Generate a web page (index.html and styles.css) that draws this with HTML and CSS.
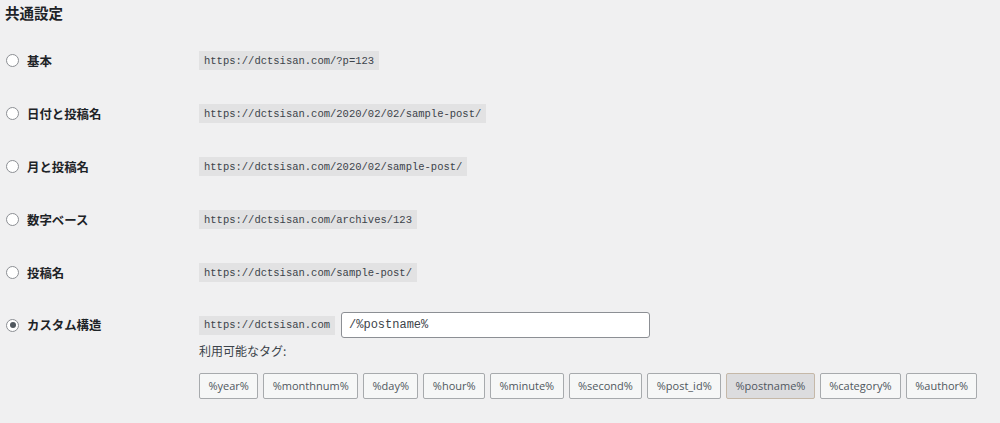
FILE: index.html
```html
<!DOCTYPE html>
<html lang="ja">
<head>
<meta charset="utf-8">
<title>共通設定</title>
<link rel="stylesheet" href="styles.css">
</head>
<body>
<div class="page">
  <h2 class="title">共通設定</h2>
  <div class="rows">
    <div class="row">
      <label class="opt"><span class="radio"></span><span class="lbl">基本</span></label>
      <div class="val"><code>https://dctsisan.com/?p=123</code></div>
    </div>
    <div class="row">
      <label class="opt"><span class="radio"></span><span class="lbl">日付と投稿名</span></label>
      <div class="val"><code>https://dctsisan.com/2020/02/02/sample-post/</code></div>
    </div>
    <div class="row">
      <label class="opt"><span class="radio"></span><span class="lbl">月と投稿名</span></label>
      <div class="val"><code>https://dctsisan.com/2020/02/sample-post/</code></div>
    </div>
    <div class="row">
      <label class="opt"><span class="radio"></span><span class="lbl">数字ベース</span></label>
      <div class="val"><code>https://dctsisan.com/archives/123</code></div>
    </div>
    <div class="row">
      <label class="opt"><span class="radio"></span><span class="lbl">投稿名</span></label>
      <div class="val"><code>https://dctsisan.com/sample-post/</code></div>
    </div>
    <div class="row custom">
      <label class="opt"><span class="radio checked"></span><span class="lbl">カスタム構造</span></label>
      <div class="col">
        <div class="struct">
          <code>https://dctsisan.com</code>
          <div class="input">/%postname%</div>
        </div>
        <div class="avail">利用可能なタグ:</div>
        <div class="tags">
          <button class="tag">%year%</button>
          <button class="tag">%monthnum%</button>
          <button class="tag">%day%</button>
          <button class="tag">%hour%</button>
          <button class="tag">%minute%</button>
          <button class="tag">%second%</button>
          <button class="tag">%post_id%</button>
          <button class="tag active">%postname%</button>
          <button class="tag">%category%</button>
          <button class="tag">%author%</button>
        </div>
      </div>
    </div>
  </div>
</div>
</body>
</html>
```
FILE: styles.css
```css
html, body {
  margin: 0;
  padding: 0;
  background: #f0f0f1;
}
body {
  font-family: "Noto Sans CJK JP", "Noto Sans", sans-serif;
  color: #1d2327;
}
.page {
  padding: 0 0 0 5px;
  height: 423px;
  overflow: hidden;
}
.title {
  margin: 0;
  height: 34px;
  font-size: 14.5px;
  font-weight: 700;
  line-height: 26px;
}
.row {
  display: grid;
  grid-template-columns: 194px 1fr;
  align-items: center;
  height: 53px;
}
.row.custom {
  align-items: start;
  height: auto;
  padding-top: 13px;
}
.val {
  display: flex;
  align-items: center;
}
.opt {
  display: flex;
  align-items: center;
  height: 26px;
}
.radio {
  width: 11px;
  height: 11px;
  border: 1px solid #8c8f94;
  border-radius: 50%;
  background: #fff;
  margin-left: 1px;
  margin-right: 8px;
  position: relative;
  flex: none;
}
.radio.checked::after {
  content: "";
  position: absolute;
  left: 2.5px;
  top: 2.5px;
  width: 6px;
  height: 6px;
  border-radius: 50%;
  background: #50575e;
}
.lbl {
  font-size: 12.4px;
  font-weight: 700;
  color: #1d2327;
}
code {
  font-family: "Liberation Mono", "DejaVu Sans Mono", monospace;
  font-size: 10.5px;
  background: #e2e2e3;
  color: #3c434a;
  padding: 3.5px 5px;
  line-height: 12px;
  display: block;
}
.struct {
  display: flex;
  align-items: center;
  gap: 6px;
  height: 26px;
}
.input {
  width: 309px;
  height: 26px;
  box-sizing: border-box;
  background: #fff;
  border: 1px solid #8c8f94;
  border-radius: 3px;
  font-family: "Liberation Mono", "DejaVu Sans Mono", monospace;
  font-size: 12px;
  color: #3c434a;
  line-height: 24px;
  padding: 0 7px;
}
.avail {
  font-size: 12px;
  color: #3c434a;
  line-height: 16px;
  margin-top: 5px;
}
.tags {
  display: flex;
  gap: 5px;
  margin-top: 14px;
}
.tag {
  font-family: "Open Sans", "Noto Sans", sans-serif;
  font-size: 11px;
  color: #50575e;
  background: #f6f7f7;
  border: 1px solid #a7aaad;
  border-radius: 2px;
  height: 26px;
  padding: 0 8.4px;
  margin: 0;
  line-height: 24px;
}
.tag.active {
  background: #dcdcde;
  border-color: #c5b8a8;
}
```
